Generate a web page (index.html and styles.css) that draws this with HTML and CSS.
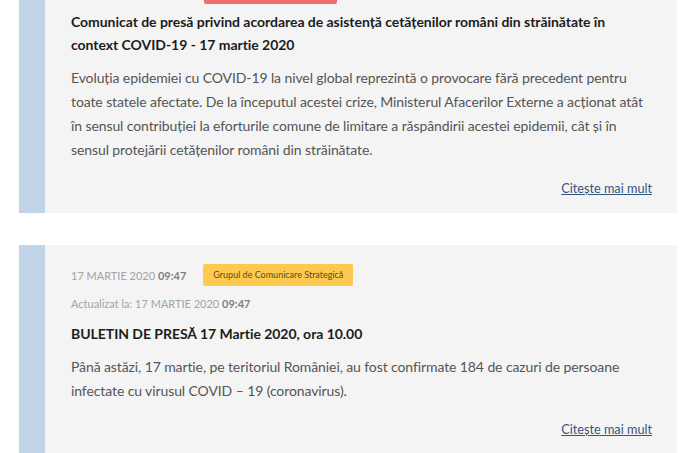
FILE: index.html
```html
<!DOCTYPE html>
<html lang="ro">

<head>
    <meta charset="UTF-8">
    <meta name="viewport" content="width=device-width, initial-scale=1.0">
    <title>Comunicate de presă</title>
    <link rel="stylesheet" href="styles.css">
</head>

<body>
    <div class="news-list">
        <div class="news-card">
            <div class="meta">
                <span class="tag red"></span>
            </div>
            <h3 class="title">Comunicat de presă privind acordarea de asistență cetățenilor români din străinătate în context COVID-19 - 17 martie 2020</h3>
            <p class="summary">Evoluția epidemiei cu COVID-19 la nivel global reprezintă o provocare fără precedent pentru toate statele afectate. De la începutul acestei crize, Ministerul Afacerilor Externe a acționat atât în sensul contribuției la eforturile comune de limitare a răspândirii acestei epidemii, cât și în sensul protejării cetățenilor români din străinătate.</p>
            <div class="more"><a href="#">Citește mai mult</a></div>
        </div>

        <div class="news-card">
            <div class="meta">
                <span class="date">17 MARTIE 2020 <b>09:47</b></span>
                <span class="tag yellow">Grupul de Comunicare Strategică</span>
            </div>
            <div class="updated">Actualizat la: 17 MARTIE 2020 <b>09:47</b></div>
            <h3 class="title">BULETIN DE PRESĂ 17 Martie 2020, ora 10.00</h3>
            <p class="summary">Până astăzi, 17 martie, pe teritoriul României, au fost confirmate 184 de cazuri de persoane infectate cu virusul COVID – 19 (coronavirus).</p>
            <div class="more"><a href="#">Citește mai mult</a></div>
        </div>
    </div>
</body>

</html>
```

FILE: styles.css
```css
body {
    margin: 0;
    padding: 0;
    background: #fff;
    font-family: Lato, "Open Sans", sans-serif;
    color: #333;
    overflow: hidden;
}

.news-list {
    margin-top: -37px;
    padding: 0 23px 0 19px;
    display: flex;
    flex-direction: column;
    gap: 32px;
}

.news-card {
    background: #f4f4f4;
    border-left: 26px solid #c2d5e6;
    padding: 19px 25px 13px 26px;
}

.meta {
    display: flex;
    align-items: center;
    gap: 17px;
    height: 22px;
}

.date,
.updated {
    font-size: 11px;
    color: #a3a3a3;
}

.date b,
.updated b {
    color: #808080;
}

.updated {
    margin-top: 6px;
    line-height: 24px;
}

.tag {
    display: inline-block;
    height: 22px;
    line-height: 22px;
    padding: 0 10px;
    font-size: 9px;
    border-radius: 2px;
    color: #5e4a1c;
}

.tag.yellow {
    background: #fdc94e;
}

/* eticheta din primul card e aproape toata deasupra ecranului */
.tag.red {
    background: #f26d6d;
    width: 113px;
    margin-left: 133px;
}

.title {
    margin: 6px 0 0;
    font-size: 14px;
    line-height: 23px;
    font-weight: bold;
    letter-spacing: -0.04px;
    color: #1c1c1c;
}

.summary {
    margin: 10px 0 0;
    font-size: 14px;
    line-height: 24px;
    letter-spacing: -0.1px;
    color: #555;
}

.more {
    margin-top: 13px;
    text-align: right;
    line-height: 24px;
}

.more a {
    font-size: 12.7px;
    color: #34557f;
    text-decoration: underline;
}
```
